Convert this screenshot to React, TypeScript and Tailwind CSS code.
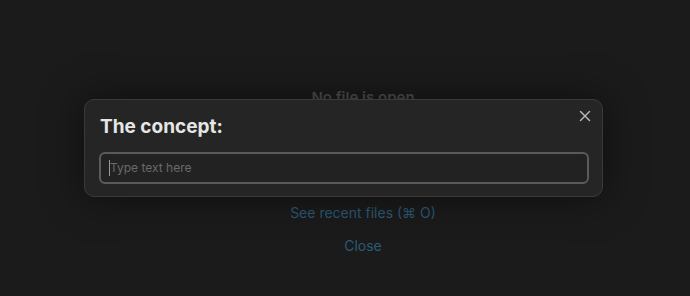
import { X } from 'lucide-react';

export default function App() {
  return (
    <div
      className="relative w-[690px] h-[296px] overflow-hidden bg-[#1b1b1b]"
      style={{ fontFamily: 'Inter, "Noto Sans", sans-serif' }}
    >
      {/* Empty state behind the modal */}
      <div className="flex flex-col items-center pt-[88px] pl-[36px]">
        <div className="text-[15px] font-semibold text-[#4e4e4e] leading-5">No file is open</div>
        <div className="mt-[95px] text-[14px] text-[#2c5a78] leading-5">See recent files (⌘ O)</div>
        <div className="mt-[13px] text-[14px] text-[#2c5a78] leading-5">Close</div>
      </div>

      {/* Modal */}
      <div className="absolute left-[84px] top-[99px] w-[519px] h-[98px] rounded-[10px] border border-[#3a3a3a] bg-[#252525] shadow-[0_0_40px_rgba(0,0,0,0.5)] px-[14px] pt-[15px]">
        <button className="absolute right-[8px] top-[7px] text-[#b5b5b5]">
          <X className="w-[18px] h-[18px]" strokeWidth={2} />
        </button>
        <div className="pl-[1px] text-[19px] font-bold text-[#e6e6e6] leading-6">The concept:</div>
        <div className="mt-[13px] h-[32px] w-[490px] rounded-[6px] border-2 border-[#5a5a5a] bg-[#222222] flex items-center px-[8px]">
          <span className="w-[1px] h-[16px] bg-[#9a9a9a]" />
          <span className="text-[12px] text-[#6a6a6a]">Type text here</span>
        </div>
      </div>
    </div>
  );
}
